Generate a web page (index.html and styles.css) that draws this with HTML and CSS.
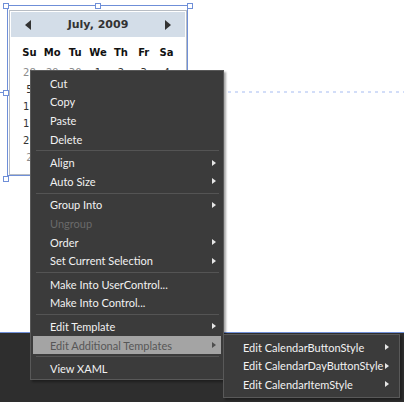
FILE: index.html
```html
<!DOCTYPE html>
<html>
<head>
<meta charset="utf-8">
<link rel="stylesheet" href="styles.css">
</head>
<body>
<div class="stage">
  <div class="artboard-dark"></div>
  <div class="guide-dash"></div>
  <div class="guide-tick"></div>

  <div class="calendar">
    <div class="cal-head">
      <span class="cal-arrow left"></span>
      <span class="cal-title">July, 2009</span>
      <span class="cal-arrow right"></span>
    </div>
    <div class="cal-grid">
      <span class="wd">Su</span><span class="wd">Mo</span><span class="wd">Tu</span><span class="wd">We</span><span class="wd">Th</span><span class="wd">Fr</span><span class="wd">Sa</span>
      <span class="dt other">28</span><span class="dt other">29</span><span class="dt other">30</span><span class="dt">1</span><span class="dt">2</span><span class="dt">3</span><span class="dt">4</span>
      <span class="dt">5</span><span class="dt">6</span><span class="dt">7</span><span class="dt">8</span><span class="dt">9</span><span class="dt">10</span><span class="dt">11</span>
      <span class="dt">12</span><span class="dt">13</span><span class="dt">14</span><span class="dt">15</span><span class="dt">16</span><span class="dt">17</span><span class="dt">18</span>
      <span class="dt">19</span><span class="dt">20</span><span class="dt">21</span><span class="dt">22</span><span class="dt">23</span><span class="dt">24</span><span class="dt">25</span>
      <span class="dt">26</span><span class="dt">27</span><span class="dt">28</span><span class="dt">29</span><span class="dt">30</span><span class="dt">31</span><span class="dt other">1</span>
      <span class="dt other">2</span><span class="dt other">3</span><span class="dt other">4</span><span class="dt other">5</span><span class="dt other">6</span><span class="dt other">7</span><span class="dt other">8</span>
    </div>
  </div>

  <div class="sel-frame"></div>
  <div class="handle h-tl"></div>
  <div class="handle h-tc"></div>
  <div class="handle h-tr"></div>
  <div class="handle h-ml"></div>
  <div class="handle h-bl"></div>

  <div class="menu main-menu">
    <div class="item">Cut</div>
    <div class="item">Copy</div>
    <div class="item">Paste</div>
    <div class="item">Delete</div>
    <div class="sep"></div>
    <div class="item">Align<span class="arrow"></span></div>
    <div class="item">Auto Size<span class="arrow"></span></div>
    <div class="sep"></div>
    <div class="item">Group Into<span class="arrow"></span></div>
    <div class="item disabled">Ungroup</div>
    <div class="item">Order<span class="arrow"></span></div>
    <div class="item">Set Current Selection<span class="arrow"></span></div>
    <div class="sep"></div>
    <div class="item">Make Into UserControl...</div>
    <div class="item">Make Into Control...</div>
    <div class="sep"></div>
    <div class="item">Edit Template<span class="arrow"></span></div>
    <div class="item active">Edit Additional Templates<span class="arrow"></span></div>
    <div class="sep"></div>
    <div class="item">View XAML</div>
  </div>

  <div class="menu sub-menu">
    <div class="item">Edit CalendarButtonStyle<span class="arrow"></span></div>
    <div class="item">Edit CalendarDayButtonStyle<span class="arrow"></span></div>
    <div class="item">Edit CalendarItemStyle<span class="arrow"></span></div>
  </div>
</div>
</body>
</html>
```
FILE: styles.css
```css
html, body {
  margin: 0;
  padding: 0;
}
body {
  background: #ffffff;
  width: 404px;
  height: 402px;
  overflow: hidden;
}
.stage {
  position: relative;
  width: 404px;
  height: 402px;
  overflow: hidden;
  background: #ffffff;
}
.artboard-dark {
  position: absolute;
  left: 0;
  right: 0;
  top: 332px;
  bottom: 0;
  border-top: 1px solid #6f8fd8;
  background: #2e2e2e;
}
.guide-dash {
  position: absolute;
  left: 228px;
  right: 0;
  top: 91px;
  height: 2px;
  background: repeating-linear-gradient(to right, #d2ddf8 0, #d2ddf8 3px, transparent 3px, transparent 7px);
}
.guide-tick {
  position: absolute;
  left: 0;
  top: 92px;
  width: 4px;
  height: 1px;
  background: #6f8fd8;
}

/* Calendar */
.calendar {
  position: absolute;
  left: 9px;
  top: 10px;
  width: 178px;
  height: 165px;
  box-sizing: border-box;
  border: 1px solid #b8bdc4;
  padding: 1px;
  background: #ffffff;
}
.cal-head {
  height: 25px;
  background: #d3dde8;
  display: flex;
  align-items: center;
  justify-content: space-between;
  padding: 0 14px;
}
.cal-arrow {
  width: 0;
  height: 0;
  border-top: 5px solid transparent;
  border-bottom: 5px solid transparent;
}
.cal-arrow.left { border-right: 6px solid #333333; }
.cal-arrow.right { border-left: 6px solid #333333; }
.cal-title {
  font-family: "DejaVu Sans", sans-serif;
  font-weight: bold;
  font-size: 11px;
  color: #333333;
}
.cal-grid {
  display: grid;
  grid-template-columns: repeat(7, 1fr);
  grid-template-rows: 18px repeat(6, 17.1px);
  padding: 7px 7px 0 7px;
  row-gap: 0;
}
.cal-grid .wd {
  grid-row: 1;
  font-family: "DejaVu Sans", sans-serif;
  font-weight: bold;
  font-size: 10px;
  color: #111111;
  text-align: center;
  line-height: 18px;
}
.cal-grid .dt {
  font-family: "DejaVu Sans", sans-serif;
  font-size: 10px;
  color: #333333;
  text-align: center;
  line-height: 12px;
  padding-top: 5px;
}
.cal-grid .dt.other { color: #8c8c8c; }

/* selection adorner */
.sel-frame {
  position: absolute;
  left: 7px;
  top: 5px;
  width: 179px;
  height: 169px;
  border: 1px solid #6f8fd8;
}
.handle {
  position: absolute;
  width: 4px;
  height: 4px;
  border: 1px solid #6f8fd8;
  background: #ffffff;
}
.h-tl { left: 3px; top: 3px; }
.h-tc { left: 95px; top: 3px; }
.h-tr { left: 187px; top: 3px; }
.h-ml { left: 3px; top: 90px; }
.h-bl { left: 3px; top: 176px; }

/* Context menus */
.menu {
  position: absolute;
  box-sizing: border-box;
  background: #3b3b3b;
  border: 1px solid #595959;
  padding: 3px 0 1px 0;
  box-shadow: 2px 2px 2px rgba(0, 0, 0, 0.35);
  font-family: Lato, "Open Sans", sans-serif;
  font-size: 11px;
}
.main-menu {
  left: 30px;
  top: 70px;
  width: 194px;
}
.sub-menu {
  left: 223px;
  top: 334px;
  width: 177px;
  padding-bottom: 3px;
}
.item {
  height: 18.6px;
  display: flex;
  align-items: center;
  justify-content: space-between;
  padding: 0 7px 0 19px;
  color: #f2f2f2;
  white-space: nowrap;
}
.sub-menu .item {
  padding-right: 10px;
}
.item.disabled {
  color: #6a6a6a;
}
.item.active {
  background: #a4a4a4;
  color: #575757;
  margin: 0 2px;
  padding-left: 17px;
  padding-right: 5px;
}
.arrow {
  width: 0;
  height: 0;
  border-left: 4px solid #e6e6e6;
  border-top: 3.5px solid transparent;
  border-bottom: 3.5px solid transparent;
}
.item.active .arrow {
  border-left-color: #4e4e4e;
}
.sep {
  height: 1px;
  margin: 2px 4px 2px 5px;
  background: #545454;
}
```
